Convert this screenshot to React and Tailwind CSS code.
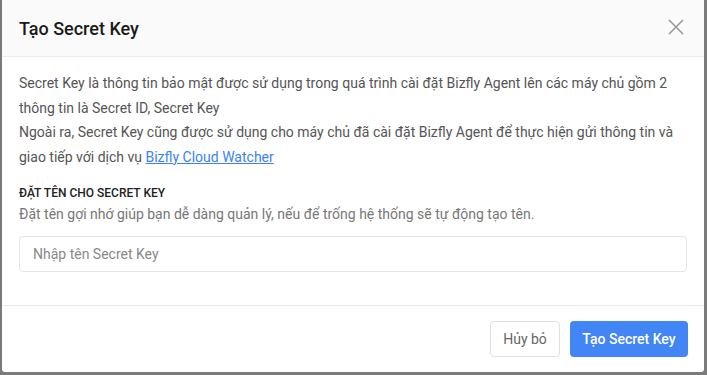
import React from "react";

const CloseIcon = () => (
  <svg width="16" height="16" viewBox="0 0 16 16" fill="none">
    <path d="M1 1L15 15M15 1L1 15" stroke="#9a9a9a" strokeWidth="1.6" />
  </svg>
);

const App = () => {
  return (
    <div className="h-[375px] w-[707px] bg-[#7b7b7b] font-['Roboto',sans-serif] overflow-hidden">
      <div className="ml-[2px] flex h-[372px] w-[702px] flex-col rounded-b-[3px] bg-white">
        <div className="flex h-[57px] shrink-0 items-center justify-between border-b border-[#ebebeb] bg-[#fafafa] pl-[17px] pr-[20px]">
          <h2 className="text-[18px] font-medium text-[#1a1a1a]">Tạo Secret Key</h2>
          <button className="mt-[-2px]">
            <CloseIcon />
          </button>
        </div>
        <div className="flex-1 px-[17px] pt-[14px]">
          <p className="text-[14px] leading-[24.5px] text-[#555]">
            Secret Key là thông tin bảo mật được sử dụng trong quá trình cài đặt Bizfly Agent lên các máy chủ gồm 2
            thông tin là Secret ID, Secret Key
            <br />
            Ngoài ra, Secret Key cũng được sử dụng cho máy chủ đã cài đặt Bizfly Agent để thực hiện gửi thông tin và
            giao tiếp với dịch vụ{" "}
            <a href="#" className="text-[#3b82f6] underline">
              Bizfly Cloud Watcher
            </a>
          </p>
          <div className="mt-[15px] text-[12px] font-medium uppercase leading-[18px] text-[#222]">
            Đặt tên cho Secret Key
          </div>
          <div className="mt-[2px] text-[14px] leading-[20px] text-[#777]">
            Đặt tên gợi nhớ giúp bạn dễ dàng quản lý, nếu để trống hệ thống sẽ tự động tạo tên.
          </div>
          <input
            className="mt-[12px] h-[36px] w-full rounded-[4px] border border-[#e6e6e6] px-[13px] text-[14px] text-[#333] outline-none placeholder:text-[#888]"
            placeholder="Nhập tên Secret Key"
          />
        </div>
        <div className="flex h-[67px] shrink-0 items-center justify-end gap-[10px] border-t border-[#ebebeb] pr-[16px]">
          <button className="h-[36px] w-[70px] rounded-[4px] border border-[#e0e0e0] bg-white text-[14px] text-[#666]">
            Hủy bỏ
          </button>
          <button className="h-[36px] w-[118px] rounded-[4px] bg-[#4285f4] text-[14px] font-medium text-white">
            Tạo Secret Key
          </button>
        </div>
      </div>
    </div>
  );
};

export default App;
